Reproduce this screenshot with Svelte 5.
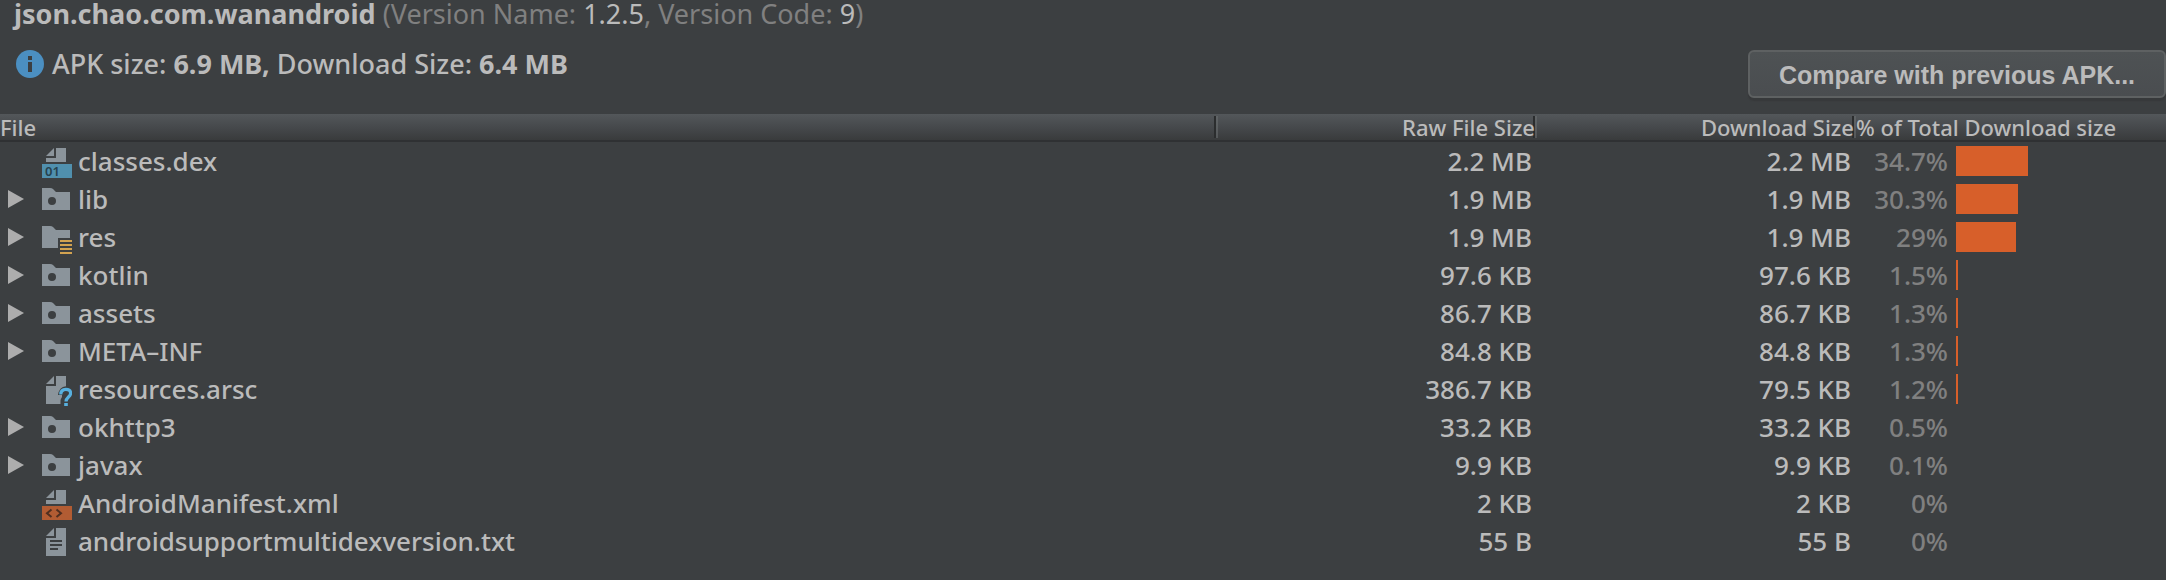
<script>
  const app = { id: 'json.chao.com.wanandroid', version: '1.2.5', code: '9' };

  const files = $state([
    { name: 'classes.dex', icon: 'dex', raw: '2.2 MB', download: '2.2 MB', share: 34.7 },
    { name: 'lib', icon: 'folder', raw: '1.9 MB', download: '1.9 MB', share: 30.3, open: false },
    { name: 'res', icon: 'res', raw: '1.9 MB', download: '1.9 MB', share: 29, open: false },
    { name: 'kotlin', icon: 'folder', raw: '97.6 KB', download: '97.6 KB', share: 1.5, open: false },
    { name: 'assets', icon: 'folder', raw: '86.7 KB', download: '86.7 KB', share: 1.3, open: false },
    { name: 'META–INF', icon: 'folder', raw: '84.8 KB', download: '84.8 KB', share: 1.3, open: false },
    { name: 'resources.arsc', icon: 'unknown', raw: '386.7 KB', download: '79.5 KB', share: 1.2 },
    { name: 'okhttp3', icon: 'folder', raw: '33.2 KB', download: '33.2 KB', share: 0.5, open: false },
    { name: 'javax', icon: 'folder', raw: '9.9 KB', download: '9.9 KB', share: 0.1, open: false },
    { name: 'AndroidManifest.xml', icon: 'xml', raw: '2 KB', download: '2 KB', share: 0 },
    { name: 'androidsupportmultidexversion.txt', icon: 'text', raw: '55 B', download: '55 B', share: 0 },
  ]);

  const FULL_BAR = 207;
  const barWidth = (share) => Math.floor((share / 100) * FULL_BAR / 2 + 0.1) * 2;
</script>

{#snippet fileIcon(kind)}
  <svg class="icon" viewBox="0 0 32 32" width="32" height="32" aria-hidden="true">
    {#if kind === 'folder'}
      <path class="grey" fill-rule="evenodd" d="M2 4H10Q12 4 13 5L16 8H30V26H2ZM12 13a4 4 0 1 0 0 8a4 4 0 1 0 0-8Z" />
    {:else if kind === 'res'}
      <path class="grey" d="M2 4H10Q12 4 13 5L16 8H30V16H18V26H2Z" />
      <path class="amber" d="M20 18H32V20H20ZM20 22H32V24H20ZM20 26H32V28H20ZM20 30H32V32H20Z" />
    {:else if kind === 'dex' || kind === 'xml'}
      <path class="grey" d="M14 2V10H6ZM16 2H26V16H6V12H16Z" />
      <rect class={kind} x="2" y="18" width="30" height="14" />
      {#if kind === 'dex'}
        <text x="5" y="30">01</text>
      {:else}
        <path class="chevrons" d="M11.5 21.5L7 25.2L11.5 29M16.5 21.5L21 25.2L16.5 29" />
      {/if}
    {:else if kind === 'unknown'}
      <path class="grey" d="M14 2V10H6ZM16 2H26V12.2Q19 13 18 21H22V23Q20.5 25 20.5 26.5V30H6V12H16Z" />
      <path class="query" d="M20.8 20.5C20.8 17 23 15.4 25.9 15.4C28.8 15.4 30.6 17 30.6 19.3C30.6 23 26 23 26 27.6" />
      <rect class="dot" x="24.2" y="29" width="3.6" height="3" />
    {:else}
      <path class="grey" fill-rule="evenodd" d="M14 2V10H6ZM16 2H26V30H6V12H16ZM10 14H22V16H10ZM10 18H22V20H10ZM10 22H18V24H10Z" />
    {/if}
  </svg>
{/snippet}

<main>
  <header>
    <div class="summary">
      <p>
        <b>{app.id}</b>
        <span class="muted">(Version Name: <span class="value">{app.version}</span>, Version Code: <span class="value">{app.code}</span>)</span>
      </p>
      <p class="sizes">
        <svg viewBox="0 0 28 28" width="28" height="28" aria-hidden="true">
          <circle cx="14" cy="14" r="14" fill="#4b8fc1" />
          <path d="M12 6H16V10H12ZM12 12H16V22H12Z" fill="#3c3f41" />
        </svg>
        <span>APK size: <b>6.9 MB,</b> Download Size: <b>6.4 MB</b></span>
      </p>
    </div>
    <button class="compare" type="button">Compare with previous APK...</button>
  </header>

  <table>
    <thead>
      <tr>
        <th class="file" scope="col">File</th>
        <th class="size" scope="col">Raw File Size</th>
        <th class="size" scope="col">Download Size</th>
        <th class="share" scope="col">% of Total Download size</th>
      </tr>
    </thead>
    <tbody>
      {#each files as file}
        <tr>
          <td>
            <div class="name">
              {#if file.open !== undefined}
                <button
                  class="toggle"
                  class:open={file.open}
                  type="button"
                  aria-label={file.name}
                  aria-expanded={file.open}
                  onclick={() => (file.open = !file.open)}
                >
                  <svg viewBox="0 0 16 18" width="16" height="18" aria-hidden="true"><path d="M0 0L16 9L0 18Z" fill="#adadad" /></svg>
                </button>
              {:else}
                <span class="toggle"></span>
              {/if}
              {@render fileIcon(file.icon)}
              <span>{file.name}</span>
            </div>
          </td>
          <td class="number">{file.raw}</td>
          <td class="number">{file.download}</td>
          <td>
            <div class="total">
              <span class="percent">{file.share}%</span>
              <span class="bar" style:width="{barWidth(file.share)}px"></span>
            </div>
          </td>
        </tr>
      {/each}
    </tbody>
  </table>
</main>

<style>
  :global(body) {
    background: #3c3f41;
  }

  main {
    min-height: 100vh;
    background: #3c3f41;
    color: #bbbbbb;
    font: 500 26px/28px "Noto Sans", "Open Sans", sans-serif;
  }

  header {
    display: flex;
    justify-content: space-between;
    align-items: flex-end;
    padding-bottom: 16px;
    font-size: 27px;
  }

  .summary {
    display: flex;
    flex-direction: column;
    gap: 22px;
    padding: 0 0 20px 14px;
  }

  p {
    margin: 0;
  }

  b {
    font-weight: 700;
  }

  .muted {
    color: #808080;
    font-weight: 400;
  }

  .value {
    color: #bbbbbb;
  }

  .sizes {
    display: flex;
    align-items: center;
    gap: 8px;
    padding-left: 2px;
  }

  svg {
    display: block;
    flex: none;
  }

  button {
    color: inherit;
    cursor: pointer;
  }

  .compare {
    min-width: 418px;
    height: 48px;
    padding: 2px 24px 0;
    border: 2px solid #5e6162;
    border-radius: 6px;
    background: linear-gradient(#4e5254, #4a4d50);
    box-shadow: 0 3px 1px #37393b;
    font: bold 25px/42px "Liberation Sans", Arial, sans-serif;
  }

  table {
    width: 100%;
    border-collapse: collapse;
    table-layout: fixed;
  }

  th,
  td {
    padding: 0;
  }

  th {
    height: 26px;
    border-bottom: 2px solid #2f3133;
    background:
      linear-gradient(#2b2d2e, #2b2d2e) right 2px top 2px / 2px 22px no-repeat,
      linear-gradient(#606466, #55585a) right 0 top 2px / 2px 22px no-repeat,
      linear-gradient(#53575a, #46494c 50%, #393b3c);
    font-size: 22px;
    font-weight: 500;
    line-height: 26px;
    text-align: right;
    white-space: nowrap;
  }

  .file {
    text-align: left;
  }

  .size {
    width: 319px;
    padding-right: 2px;
    box-sizing: border-box;
  }

  .share {
    width: 310px;
    background: linear-gradient(#53575a, #46494c 50%, #393b3c);
    text-align: left;
  }

  .number {
    padding-right: 5px;
    text-align: right;
  }

  .name,
  .total {
    display: flex;
    align-items: center;
    height: 38px;
  }

  .name {
    padding-left: 8px;
  }

  .toggle {
    width: 16px;
    height: 18px;
    margin-right: 16px;
    padding: 0;
    border: 0;
    background: none;
  }

  .open {
    transform: rotate(90deg);
  }

  .icon {
    margin: 2px 6px 0 0;
  }

  .percent {
    width: 92px;
    margin-right: 8px;
    color: #808080;
    text-align: right;
  }

  .bar {
    height: 30px;
    background: #d75f2a;
  }

  .grey {
    fill: #8b949b;
  }

  .amber {
    fill: #d2a250;
  }

  .dex {
    fill: #5090ae;
  }

  .xml {
    fill: #b25c33;
  }

  .chevrons {
    fill: none;
    stroke: #502f20;
    stroke-width: 2;
  }

  .query {
    fill: none;
    stroke: #57b0df;
    stroke-width: 3.2;
  }

  .dot {
    fill: #57b0df;
  }

  text {
    fill: #26424f;
    font: 600 13px "Noto Sans", sans-serif;
  }
</style>
